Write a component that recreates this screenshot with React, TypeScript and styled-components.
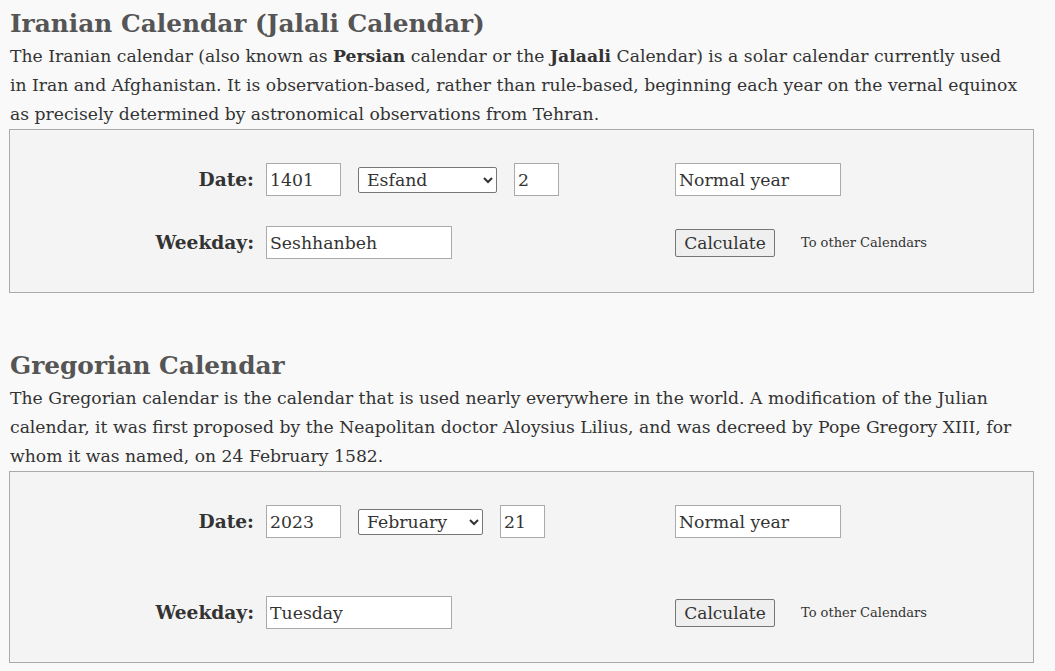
import React from "react";
import styled, { createGlobalStyle } from "styled-components";

const Global = createGlobalStyle`
  html, body { margin: 0; padding: 0; background: #f9f9f9; }
  body { font-family: "DejaVu Serif", Georgia, serif; color: #333; }
`;

const Page = styled.div`
  width: 1025px;
  padding: 5px 0 0 9px;
`;

const Section = styled.section<{ $top: number }>`
  margin-top: ${(p) => p.$top}px;
`;

const Title = styled.h2`
  margin: 0;
  padding-left: 1px;
  font-size: 24.8px;
  line-height: 37px;
  font-weight: bold;
  color: #555;
`;

const Text = styled.p`
  margin: 0;
  padding-left: 1px;
  font-size: 17.2px;
  line-height: 29px;
  color: #333;
  white-space: nowrap;
  b { font-weight: bold; }
`;

const Box = styled.div<{ $gap: number }>`
  border: 1px solid #aaa;
  background: #f4f4f4;
  padding: 33px 0 33px 0;
  display: grid;
  grid-template-columns: 244px 397px 1fr;
  column-gap: 12px;
  row-gap: ${(p) => p.$gap}px;
  align-items: center;
`;

const Label = styled.label`
  text-align: right;
  font-weight: bold;
  font-size: 18.6px;
  color: #333;
`;

const Fields = styled.div`
  display: flex;
  align-items: center;
  gap: 17px;
`;

const Field = styled.input<{ $w: number }>`
  box-sizing: border-box;
  width: ${(p) => p.$w}px;
  height: 33px;
  border: 1px solid #aaa;
  background: #fff;
  padding: 0 3px;
  font-family: "DejaVu Serif", Georgia, serif;
  font-size: 17.3px;
  color: #333;
  outline: none;
`;

const Picker = styled.select<{ $w: number }>`
  box-sizing: border-box;
  width: ${(p) => p.$w}px;
  height: 26px;
  border: 1px solid #767676;
  border-radius: 2px;
  background: #fff;
  padding: 0 2px 0 4px;
  font-family: "DejaVu Serif", Georgia, serif;
  font-size: 17.3px;
  color: #333;
`;

const Side = styled.div`
  display: flex;
  align-items: center;
  gap: 26px;
`;

const Button = styled.button`
  box-sizing: border-box;
  width: 100px;
  height: 28px;
  border: 1px solid #767676;
  border-radius: 2px;
  background: #efefef;
  font-family: "DejaVu Serif", Georgia, serif;
  font-size: 17px;
  color: #333;
  padding: 0;
`;

const Link = styled.span`
  font-size: 13px;
  color: #333;
`;

type CalProps = {
  gap: number;
  year: string;
  months: string[];
  month: string;
  monthW: number;
  day: string;
  weekday: string;
};

function Calculator({ gap, year, months, month, monthW, day, weekday }: CalProps) {
  return (
    <Box $gap={gap}>
      <Label>Date:</Label>
      <Fields>
        <Field $w={75} defaultValue={year} />
        <Picker $w={monthW} defaultValue={month}>
          {months.map((m) => (
            <option key={m} value={m}>
              {m}
            </option>
          ))}
        </Picker>
        <Field $w={45} defaultValue={day} />
      </Fields>
      <Side>
        <Field $w={166} defaultValue="Normal year" />
      </Side>
      <Label>Weekday:</Label>
      <Fields>
        <Field $w={186} defaultValue={weekday} />
      </Fields>
      <Side>
        <Button>Calculate</Button>
        <Link>To other Calendars</Link>
      </Side>
    </Box>
  );
}

const persianMonths = [
  "Farvardin", "Ordibehesht", "Khordad", "Tir", "Mordad", "Shahrivar",
  "Mehr", "Aban", "Azar", "Dey", "Bahman", "Esfand",
];
const gregorianMonths = [
  "January", "February", "March", "April", "May", "June", "July",
  "August", "September", "October", "November", "December",
];

export default function App() {
  return (
    <>
      <Global />
      <Page>
        <Section $top={0}>
          <Title>Iranian Calendar (Jalali Calendar)</Title>
          <Text>
            The Iranian calendar (also known as <b>Persian</b> calendar or the <b>Jalaali</b> Calendar) is a
            solar calendar currently used
            <br />
            in Iran and Afghanistan. It is observation-based, rather than rule-based, beginning each year
            on the vernal equinox
            <br />
            as precisely determined by astronomical observations from Tehran.
          </Text>
          <Calculator
            gap={30}
            year="1401"
            months={persianMonths}
            month="Esfand"
            monthW={139}
            day="2"
            weekday="Seshhanbeh"
          />
        </Section>
        <Section $top={54}>
          <Title>Gregorian Calendar</Title>
          <Text>
            The Gregorian calendar is the calendar that is used nearly everywhere in the world. A
            modification of the Julian
            <br />
            calendar, it was first proposed by the Neapolitan doctor Aloysius Lilius, and was decreed by
            Pope Gregory XIII, for
            <br />
            whom it was named, on 24 February 1582.
          </Text>
          <Calculator
            gap={58}
            year="2023"
            months={gregorianMonths}
            month="February"
            monthW={125}
            day="21"
            weekday="Tuesday"
          />
        </Section>
      </Page>
    </>
  );
}
